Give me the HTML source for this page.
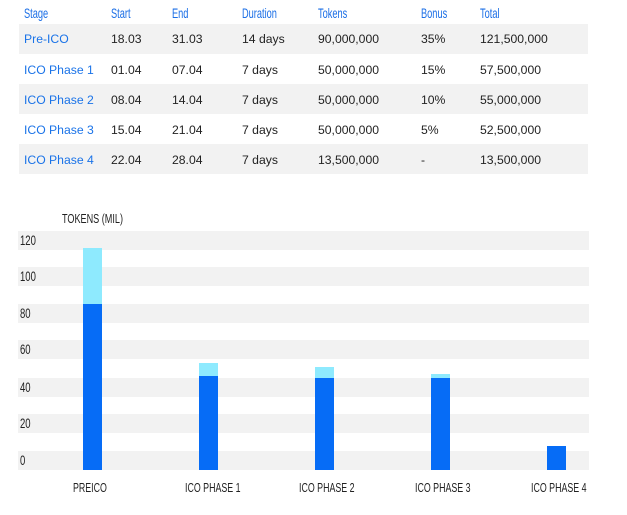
<!DOCTYPE html><html><head><style>
body{margin:0;width:627px;height:515px;background:#fff;position:relative;overflow:hidden;font-family:"Liberation Sans",sans-serif}
.a{position:absolute;white-space:nowrap}
.h{color:#1a6ee6;font-size:14px;top:5px;transform:scaleX(.66);transform-origin:0 0}
.r{position:absolute;left:19px;width:569px;height:30px}
.g{background:#f2f2f2}
.c{position:absolute;font-size:12.2px;color:#222;line-height:30px}
.s{color:#1a73e8}
.b{position:absolute;left:18px;width:571px;height:19px;background:#f2f2f2}
.y{position:absolute;left:20px;font-size:14px;color:#222;transform:scaleX(.68);transform-origin:0 0}
.x{position:absolute;top:480px;font-size:13px;color:#222;transform:scaleX(.68);transform-origin:0 0;white-space:nowrap}
.bar{position:absolute;width:19px}
.d{background:#066cf6}.l{background:#8eeafe}
</style></head><body>
<div class="a h" style="left:24px">Stage</div>
<div class="a h" style="left:111px">Start</div>
<div class="a h" style="left:172px">End</div>
<div class="a h" style="left:242px">Duration</div>
<div class="a h" style="left:318px">Tokens</div>
<div class="a h" style="left:421px">Bonus</div>
<div class="a h" style="left:480px">Total</div>

<div class="r g" style="top:24px"></div>
<div class="r" style="top:54px"></div>
<div class="r g" style="top:84px"></div>
<div class="r" style="top:114px"></div>
<div class="r g" style="top:144px"></div>

<div class="c s" style="left:24px;top:24px">Pre-ICO</div><div class="c" style="left:111px;top:24px">18.03</div><div class="c" style="left:172px;top:24px">31.03</div><div class="c" style="left:242px;top:24px">14 days</div><div class="c" style="left:318px;top:24px">90,000,000</div><div class="c" style="left:421px;top:24px">35%</div><div class="c" style="left:480px;top:24px">121,500,000</div>
<div class="c s" style="left:24px;top:55px">ICO Phase 1</div><div class="c" style="left:111px;top:55px">01.04</div><div class="c" style="left:172px;top:55px">07.04</div><div class="c" style="left:242px;top:55px">7 days</div><div class="c" style="left:318px;top:55px">50,000,000</div><div class="c" style="left:421px;top:55px">15%</div><div class="c" style="left:480px;top:55px">57,500,000</div>
<div class="c s" style="left:24px;top:85px">ICO Phase 2</div><div class="c" style="left:111px;top:85px">08.04</div><div class="c" style="left:172px;top:85px">14.04</div><div class="c" style="left:242px;top:85px">7 days</div><div class="c" style="left:318px;top:85px">50,000,000</div><div class="c" style="left:421px;top:85px">10%</div><div class="c" style="left:480px;top:85px">55,000,000</div>
<div class="c s" style="left:24px;top:115px">ICO Phase 3</div><div class="c" style="left:111px;top:115px">15.04</div><div class="c" style="left:172px;top:115px">21.04</div><div class="c" style="left:242px;top:115px">7 days</div><div class="c" style="left:318px;top:115px">50,000,000</div><div class="c" style="left:421px;top:115px">5%</div><div class="c" style="left:480px;top:115px">52,500,000</div>
<div class="c s" style="left:24px;top:145px">ICO Phase 4</div><div class="c" style="left:111px;top:145px">22.04</div><div class="c" style="left:172px;top:145px">28.04</div><div class="c" style="left:242px;top:145px">7 days</div><div class="c" style="left:318px;top:145px">13,500,000</div><div class="c" style="left:421px;top:145px">-</div><div class="c" style="left:480px;top:145px">13,500,000</div>

<div class="a" style="left:62px;top:211px;font-size:13px;color:#222;transform:scaleX(.7);transform-origin:0 0">TOKENS (MIL)</div>
<div class="b" style="top:231px"></div><div class="b" style="top:267px"></div><div class="b" style="top:304px"></div><div class="b" style="top:340px"></div><div class="b" style="top:378px"></div><div class="b" style="top:414px"></div><div class="b" style="top:451px"></div>
<div class="y" style="top:232px">120</div><div class="y" style="top:268px">100</div><div class="y" style="top:305px">80</div><div class="y" style="top:341px">60</div><div class="y" style="top:379px">40</div><div class="y" style="top:415px">20</div><div class="y" style="top:452px">0</div>

<div class="bar l" style="left:83px;top:248px;height:56px"></div><div class="bar d" style="left:83px;top:304px;height:166px"></div>
<div class="bar l" style="left:199px;top:363px;height:13px"></div><div class="bar d" style="left:199px;top:376px;height:94px"></div>
<div class="bar l" style="left:315px;top:367px;height:11px"></div><div class="bar d" style="left:315px;top:378px;height:92px"></div>
<div class="bar l" style="left:431px;top:374px;height:4px"></div><div class="bar d" style="left:431px;top:378px;height:92px"></div>
<div class="bar d" style="left:547px;top:446px;height:24px"></div>

<div class="x" style="left:73px">PREICO</div>
<div class="x" style="left:185px">ICO PHASE 1</div>
<div class="x" style="left:299px">ICO PHASE 2</div>
<div class="x" style="left:415px">ICO PHASE 3</div>
<div class="x" style="left:531px">ICO PHASE 4</div>
</body></html>
